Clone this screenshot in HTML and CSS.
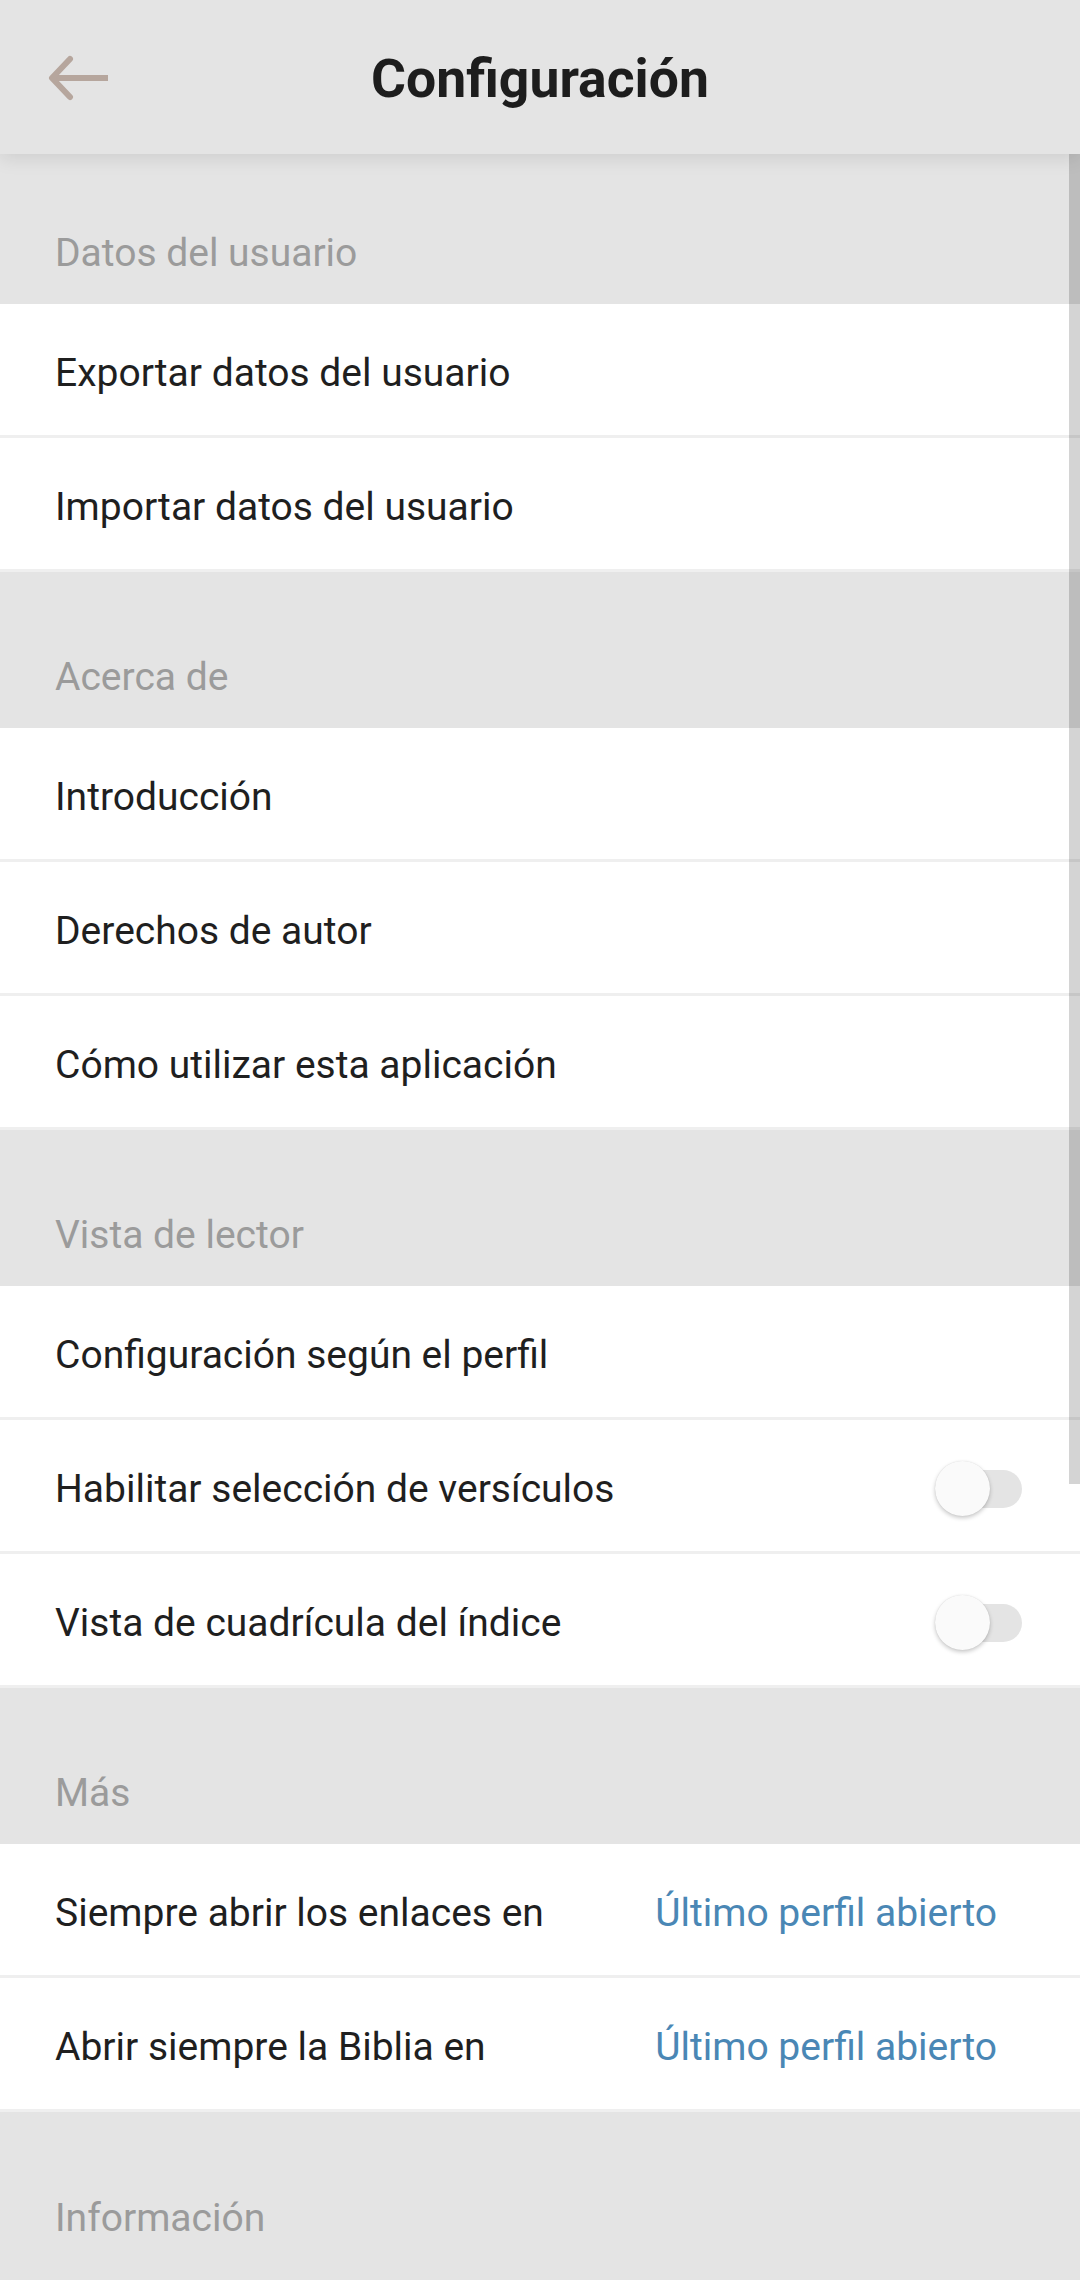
FILE: index.html
```html
<!DOCTYPE html>
<html lang="es">
<head>
<meta charset="utf-8">
<title>Configuración</title>
<link rel="stylesheet" href="styles.css">
</head>
<body>
<div class="screen">
  <header class="appbar">
    <button class="back" aria-label="Atrás">
      <svg width="64" height="48" viewBox="0 0 64 48">
        <path d="M60 24 H5" stroke="#b6a69d" stroke-width="6" fill="none"/>
        <path d="M22 5 L4 24 L22 43" stroke="#b6a69d" stroke-width="6" fill="none" stroke-linecap="round" stroke-linejoin="round"/>
      </svg>
    </button>
    <h1 class="title">Configuración</h1>
  </header>

  <main class="list">
    <div class="section first">Datos del usuario</div>
    <div class="row">Exportar datos del usuario</div>
    <div class="row">Importar datos del usuario</div>

    <div class="section">Acerca de</div>
    <div class="row">Introducción</div>
    <div class="row">Derechos de autor</div>
    <div class="row">Cómo utilizar esta aplicación</div>

    <div class="section">Vista de lector</div>
    <div class="row">Configuración según el perfil</div>
    <div class="row"><span class="label">Habilitar selección de versículos</span><span class="switch"><span class="thumb"></span></span></div>
    <div class="row"><span class="label">Vista de cuadrícula del índice</span><span class="switch"><span class="thumb"></span></span></div>

    <div class="section">Más</div>
    <div class="row"><span class="label">Siempre abrir los enlaces en</span><span class="value">Último perfil abierto</span></div>
    <div class="row"><span class="label">Abrir siempre la Biblia en</span><span class="value">Último perfil abierto</span></div>

    <div class="section last">Información</div>

    <div class="scrollbar"></div>
  </main>
</div>
</body>
</html>
```

FILE: styles.css
```css
html, body {
  margin: 0;
  padding: 0;
}
body {
  width: 1080px;
  height: 2280px;
  overflow: hidden;
  background: #e4e4e4;
  font-family: Roboto, "Noto Sans", sans-serif;
}
.screen {
  display: flex;
  flex-direction: column;
  height: 2280px;
}
.appbar {
  position: relative;
  z-index: 2;
  height: 154px;
  flex: none;
  background: #e4e4e4;
  display: flex;
  align-items: center;
  justify-content: center;
  box-shadow: 0 4px 18px rgba(0, 0, 0, 0.10);
}
.back {
  position: absolute;
  left: 48px;
  top: 54px;
  width: 64px;
  height: 48px;
  padding: 0;
  border: 0;
  background: none;
  display: flex;
}
.title {
  margin: 0;
  font-size: 53.5px;
  font-weight: 700;
  color: #1d1d1d;
  line-height: 1;
  padding-top: 4px;
}
.list {
  position: relative;
  flex: 1;
  display: flex;
  flex-direction: column;
}
.section {
  height: 156px;
  box-sizing: border-box;
  background: #e4e4e4;
  color: #9b9b9b;
  font-size: 39px;
  line-height: 40px;
  padding: 0 55px 31px;
  display: flex;
  align-items: flex-end;
}
.section.first {
  height: 150px;
}
.section.last {
  flex: 1;
  align-items: flex-start;
  padding-top: 86px;
}
.row {
  height: 134px;
  box-sizing: border-box;
  background: #fff;
  border-bottom: 3px solid #efefef;
  color: #1f1f1f;
  font-size: 39px;
  padding: 6px 0 0 55px;
  display: flex;
  align-items: center;
  justify-content: space-between;
}
.label {
  flex: 1;
}
.value {
  color: #4a87b5;
  margin-right: 83px;
}
.switch {
  position: relative;
  width: 87px;
  height: 38px;
  border-radius: 19px;
  background: #e4e4e4;
  margin-right: 58px;
}
.thumb {
  position: absolute;
  left: 0;
  top: -9px;
  width: 55px;
  height: 55px;
  border-radius: 50%;
  background: #fafafa;
  box-shadow: 0 2px 4px rgba(0, 0, 0, 0.22), 0 0 1px rgba(0, 0, 0, 0.12);
}
.scrollbar {
  position: absolute;
  right: 0;
  top: -5px;
  width: 11px;
  height: 1335px;
  background: rgba(0, 0, 0, 0.17);
}
```
